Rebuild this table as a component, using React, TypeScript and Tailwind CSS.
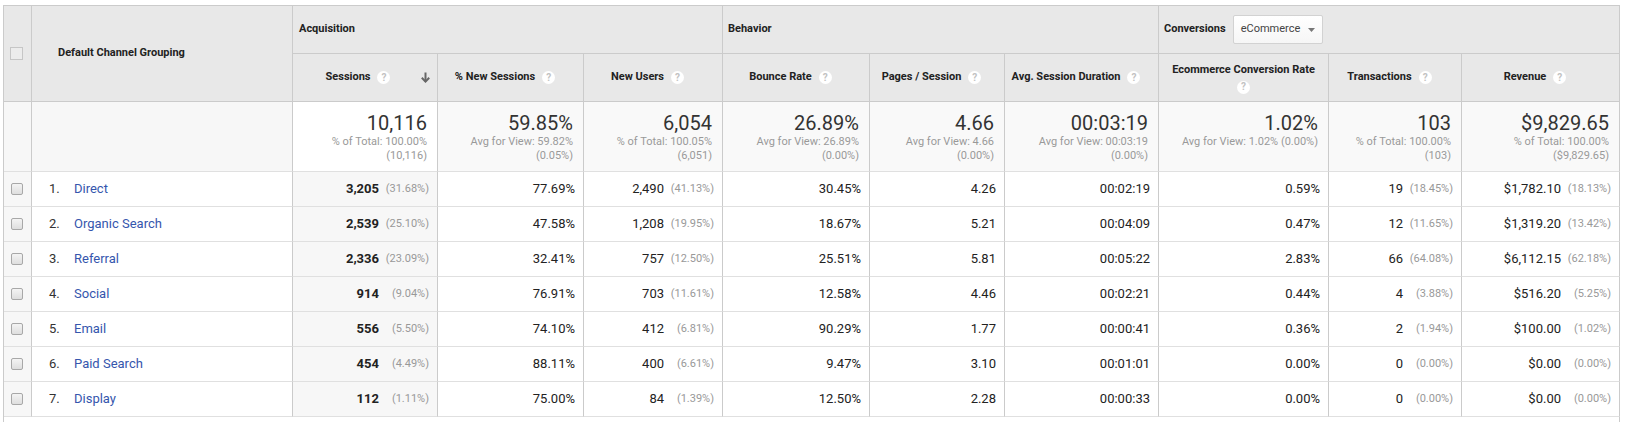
import React from "react";

function Q() {
  return (
    <span className="inline-flex items-center justify-center w-[13px] h-[13px] rounded-full bg-white text-[#c2c2c2] text-[10px] font-bold leading-none shrink-0">
      ?
    </span>
  );
}

type Cell = [string, string?];

const rows: { name: string; cells: Cell[] }[] = [
  { name: "Direct", cells: [["3,205", "(31.68%)"], ["77.69%"], ["2,490", "(41.13%)"], ["30.45%"], ["4.26"], ["00:02:19"], ["0.59%"], ["19", "(18.45%)"], ["$1,782.10", "(18.13%)"]] },
  { name: "Organic Search", cells: [["2,539", "(25.10%)"], ["47.58%"], ["1,208", "(19.95%)"], ["18.67%"], ["5.21"], ["00:04:09"], ["0.47%"], ["12", "(11.65%)"], ["$1,319.20", "(13.42%)"]] },
  { name: "Referral", cells: [["2,336", "(23.09%)"], ["32.41%"], ["757", "(12.50%)"], ["25.51%"], ["5.81"], ["00:05:22"], ["2.83%"], ["66", "(64.08%)"], ["$6,112.15", "(62.18%)"]] },
  { name: "Social", cells: [["914", "(9.04%)"], ["76.91%"], ["703", "(11.61%)"], ["12.58%"], ["4.46"], ["00:02:21"], ["0.44%"], ["4", "(3.88%)"], ["$516.20", "(5.25%)"]] },
  { name: "Email", cells: [["556", "(5.50%)"], ["74.10%"], ["412", "(6.81%)"], ["90.29%"], ["1.77"], ["00:00:41"], ["0.36%"], ["2", "(1.94%)"], ["$100.00", "(1.02%)"]] },
  { name: "Paid Search", cells: [["454", "(4.49%)"], ["88.11%"], ["400", "(6.61%)"], ["9.47%"], ["3.10"], ["00:01:01"], ["0.00%"], ["0", "(0.00%)"], ["$0.00", "(0.00%)"]] },
  { name: "Display", cells: [["112", "(1.11%)"], ["75.00%"], ["84", "(1.39%)"], ["12.50%"], ["2.28"], ["00:00:33"], ["0.00%"], ["0", "(0.00%)"], ["$0.00", "(0.00%)"]] },
];

const summary: string[][] = [
  ["10,116", "% of Total: 100.00%", "(10,116)"],
  ["59.85%", "Avg for View: 59.82%", "(0.05%)"],
  ["6,054", "% of Total: 100.05%", "(6,051)"],
  ["26.89%", "Avg for View: 26.89%", "(0.00%)"],
  ["4.66", "Avg for View: 4.66", "(0.00%)"],
  ["00:03:19", "Avg for View: 00:03:19", "(0.00%)"],
  ["1.02%", "Avg for View: 1.02% (0.00%)"],
  ["103", "% of Total: 100.00%", "(103)"],
  ["$9,829.65", "% of Total: 100.00%", "($9,829.65)"],
];

const labels = [
  "% New Sessions",
  "New Users",
  "Bounce Rate",
  "Pages / Session",
  "Avg. Session Duration",
];

function Checkbox() {
  return (
    <span className="block w-[12px] h-[12px] rounded-[2px] border border-[#a8a8a8] bg-gradient-to-b from-[#f4f4f4] to-[#dedede]" />
  );
}

export default function App() {
  return (
    <div className="bg-white pt-[5px] pl-[3px] text-[#222]" style={{ fontFamily: "Roboto, 'Liberation Sans', Arial, sans-serif" }}>
      <div className="w-[1617px]">
        <div className="grid grid-cols-[28px_261px_145px_146px_139px_147px_135px_154px_170px_133px_158px] grid-rows-[48px_48px_70px_repeat(7,35px)] border-l border-t border-[#cbcbcb]">
          {/* header row 1 + spanning cells */}
          <div className="row-span-2 bg-[#e8e8e8] border-r border-b border-[#cbcbcb] flex items-center justify-center pr-[2px]">
            <span className="block w-[13px] h-[13px] border border-[#c6c6c6] bg-[#ececec]" />
          </div>
          <div className="row-span-2 bg-[#e8e8e8] border-r border-b border-[#cbcbcb] flex items-center pl-[26px] text-[11px] font-bold">
            Default Channel Grouping
          </div>
          <div className="col-span-3 bg-[#e8e8e8] border-r border-b border-[#cbcbcb] flex items-center pl-[6px] text-[11px] font-bold">
            Acquisition
          </div>
          <div className="col-span-3 bg-[#e8e8e8] border-r border-b border-[#cbcbcb] flex items-center pl-[5px] text-[11px] font-bold">
            Behavior
          </div>
          <div className="col-span-3 bg-[#e8e8e8] border-r border-b border-[#cbcbcb] flex items-center pl-[5px] text-[11px] font-bold">
            <span>Conversions</span>
            <span className="ml-[7px] w-[90px] h-[29px] rounded-[2px] border border-[#d2d2d2] bg-gradient-to-b from-white to-[#f6f6f6] flex items-center pl-[7px] pr-[7px] justify-between font-normal text-[11px] text-[#444]">
              <span>eCommerce</span>
              <svg width="7" height="4" viewBox="0 0 7 4"><path d="M0 0 L7 0 L3.5 4 Z" fill="#777" /></svg>
            </span>
          </div>

          {/* header row 2 */}
          <div className="bg-[#e8e8e8] border-r border-b border-[#cbcbcb] flex items-center text-[11px] font-bold">
            <div className="flex-1 flex items-center justify-center gap-[7px] pl-[2px]">
              <span>Sessions</span>
              <Q />
            </div>
            <svg className="mr-[7px]" width="9" height="11" viewBox="0 0 9 11">
              <path d="M4.5 0.5 V9.5" stroke="#666" strokeWidth="2" fill="none" />
              <path d="M0.8 5.8 L4.5 9.6 L8.2 5.8" stroke="#666" strokeWidth="2" fill="none" />
            </svg>
          </div>
          {labels.map((l) => (
            <div key={l} className="bg-[#e8e8e8] border-r border-b border-[#cbcbcb] flex items-center justify-center gap-[7px] pr-[11px] text-[11px] font-bold">
              <span>{l}</span>
              <Q />
            </div>
          ))}
          <div className="bg-[#e8e8e8] border-r border-b border-[#cbcbcb] flex flex-col items-center justify-center gap-[4px] text-[11px] font-bold leading-[14px] pt-[1px]">
            <span>Ecommerce Conversion Rate</span>
            <Q />
          </div>
          <div className="bg-[#e8e8e8] border-r border-b border-[#cbcbcb] flex items-center justify-center gap-[7px] pr-[11px] text-[11px] font-bold">
            <span>Transactions</span>
            <Q />
          </div>
          <div className="bg-[#e8e8e8] border-r border-b border-[#cbcbcb] flex items-center justify-center gap-[7px] pr-[11px] text-[11px] font-bold">
            <span>Revenue</span>
            <Q />
          </div>

          {/* summary row */}
          <div className="bg-[#f7f7f7] border-r border-b border-r-[#cbcbcb] border-b-[#e0e0e0]" />
          <div className="bg-[#f7f7f7] border-r border-b border-r-[#cbcbcb] border-b-[#e0e0e0]" />
          {summary.map((s, i) => (
            <div
              key={i}
              className={`${i === 0 ? "bg-white" : "bg-[#f9f9f9]"} border-r border-b border-r-[#cbcbcb] border-b-[#e0e0e0] flex flex-col items-end pt-[9px] pr-[10px] text-right`}
            >
              <span className="text-[20px] leading-[24px] text-[#333]">{s[0]}</span>
              <span className="text-[11px] leading-[14px] text-[#999]">{s[1]}</span>
              {s[2] && <span className="text-[11px] leading-[14px] text-[#999]">{s[2]}</span>}
            </div>
          ))}

          {/* data rows */}
          {rows.map((r, ri) => (
            <React.Fragment key={r.name}>
              <div className="bg-[#f7f7f7] border-r border-b border-r-[#cbcbcb] border-b-[#e0e0e0] flex items-center justify-center pr-[1px]">
                <Checkbox />
              </div>
              <div className="bg-white border-r border-b border-r-[#cbcbcb] border-b-[#e0e0e0] flex items-center pl-[17px] text-[13px]">
                <span className="w-[25px] text-[#333]">{ri + 1}.</span>
                <span className="text-[#3556ad]">{r.name}</span>
              </div>
              {r.cells.map((c, ci) => (
                <div
                  key={ci}
                  className={`${ci === 0 ? "bg-[#f7f7f7]" : "bg-white"} border-r border-b border-r-[#cbcbcb] border-b-[#e0e0e0] flex items-center justify-end pr-[8px] text-[13px]`}
                >
                  <span className={ci === 0 ? "font-bold text-[#222]" : "text-[#222]"}>{c[0]}</span>
                  {c[1] && <span className="w-[50px] text-right text-[11px] text-[#999]">{c[1]}</span>}
                </div>
              ))}
            </React.Fragment>
          ))}
        </div>
        <div className="h-[6px] border-x border-[#cbcbcb]" />
      </div>
    </div>
  );
}
